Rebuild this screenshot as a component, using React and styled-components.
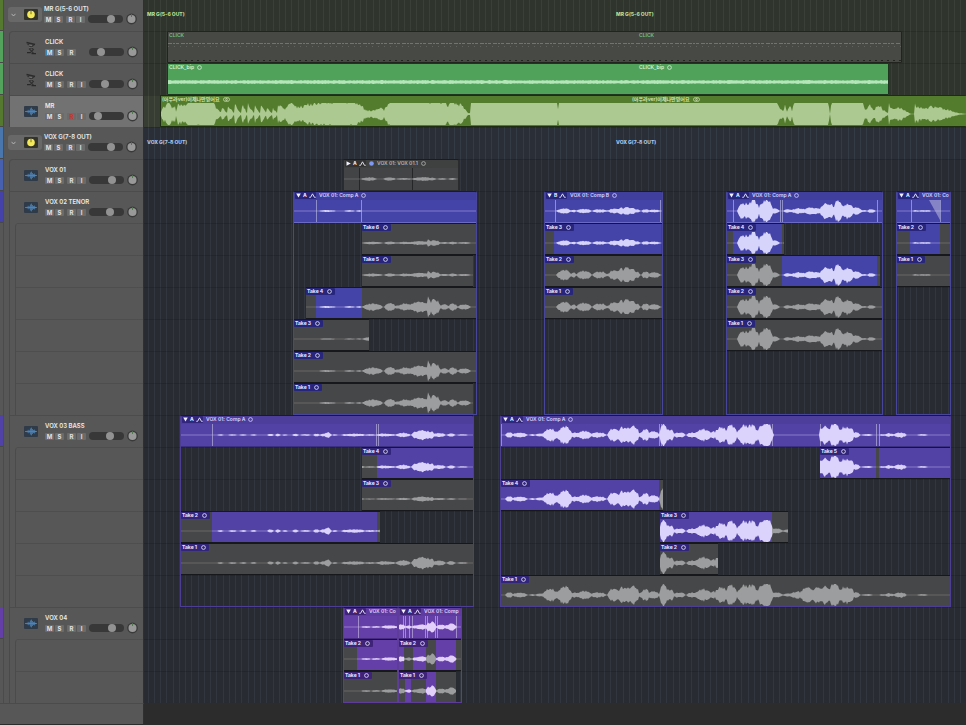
import React from 'react';
import styled, { createGlobalStyle, css } from 'styled-components';

const GlobalStyle = createGlobalStyle`
  * { box-sizing: border-box; }
  body {
    margin: 0;
    background: #2c2c2c;
    overflow: hidden;
    font-family: Inter, "Noto Sans CJK KR", sans-serif;
  }
  button, input { font: inherit; margin: 0; padding: 0; border: 0; }
`;

const ORIGIN = 144;

/* ---------- layout ---------- */

const Window = styled.main`
  display: flex;
  flex-direction: column;
  min-height: 100vh;
  margin-top: -1px;
  overflow: hidden;
`;

const TrackRow = styled.section`
  display: flex;
  flex: none;
  height: ${(p) => p.$lanes * 32}px;
`;

const Head = styled.div`
  display: flex;
  flex: none;
  width: 144px;
  background: #575757;
  border-right: 1px solid #303030;
`;

const Strip = styled.div`
  width: 4px;
  height: 32px;
  flex: none;
  background: ${(p) => p.$color};
  border-right: 1px solid #484848;
  border-bottom: 1px solid #484848;
`;

const Gutter = styled.div`
  flex: none;
  width: 4px;
  border-right: 1px solid #4b4b4b;
  margin-right: 5px;
  margin-left: -4px;
`;

const HeadBody = styled.div`
  flex: 1;
  min-width: 0;
  ${(p) =>
    p.$nested &&
    css`
      border-left: 1px solid #4a4a4a;
      border-top: 1px solid #4c4c4c;
    `}
  border-top-left-radius: ${(p) => (p.$first ? 4 : 0)}px;
  background: ${(p) => (p.$selected ? '#727272' : 'transparent')};
`;

const TrackInfo = styled.div`
  display: flex;
  align-items: center;
  height: 31px;
  margin-bottom: ${(p) => (p.$nested ? 0 : 1)}px;
`;

const IconSlot = styled.div`
  display: flex;
  align-items: center;
  justify-content: center;
  flex: none;
  width: 36px;
  padding-left: ${(p) => (p.$group ? 0 : 8)}px;
  margin-left: -1px;
  svg { display: block; }
`;

const GroupPill = styled.button`
  display: flex;
  align-items: center;
  gap: 8px;
  width: 34px;
  height: 15px;
  margin-right: 2px;
  padding: 0 3px;
  border-radius: 3px;
  background: #686868;
`;

const Controls = styled.div`
  display: flex;
  flex-direction: column;
  flex: 1;
`;

const TrackName = styled.div`
  font-size: 6px;
  line-height: 9px;
  height: 9px;
  font-weight: 600;
  color: #ececec;
  white-space: nowrap;
`;

const ControlRow = styled.div`
  display: flex;
  align-items: center;
  height: 12px;
`;

const ButtonPair = styled.div`
  display: flex;
  gap: 1px;
  width: 19px;
  margin-right: 3px;
`;

const MiniButton = styled.button`
  width: 9px;
  height: 7px;
  border-radius: 1px;
  font-size: 6px;
  line-height: 7px;
  font-weight: 700;
  text-align: center;
  background: ${(p) => (p.$on ? '#3a7fa6' : '#6b6b6b')};
  color: ${(p) => (p.$armed ? '#c0392b' : '#e2e2e2')};
`;

const Volume = styled.input`
  appearance: none;
  width: 35px;
  height: 8px;
  border-radius: 4px;
  background: #383838;
  &::-webkit-slider-thumb {
    appearance: none;
    width: 8px;
    height: 8px;
    border-radius: 50%;
    background: #929292;
  }
`;

const PanButton = styled.button`
  width: 12px;
  height: 12px;
  margin-left: 3px;
  background: none;
  svg { display: block; }
`;

const TakeRows = styled.div`
  flex: 1;
  height: ${(p) => p.$lanes * 32}px;
  margin-left: 5px;
  border-left: 1px solid #4b4b4b;
  border-top-left-radius: 4px;
  background: repeating-linear-gradient(#4e4e4e 0 1px, transparent 1px 32px);
`;

const laneColors = {
  green: ['#2f342c', '#3a4037'],
  greenLit: ['#383d33', '#444b3d'],
  vox: ['#282b32', '#32363e'],
  voxGroup: ['#2a2f37', '#353b44'],
};

const Lane = styled.div`
  display: flex;
  flex: 1;
  min-width: 0;
  overflow: hidden;
  background-color: ${(p) => laneColors[p.$tone][0]};
  background-image:
    repeating-linear-gradient(rgba(0, 0, 0, 0.14) 0 1px, transparent 1px 32px),
    repeating-linear-gradient(
      90deg,
      transparent 0 4px,
      ${(p) => laneColors[p.$tone][1]} 4px 5px,
      transparent 5px 10px,
      ${(p) => laneColors[p.$tone][1]} 10px 11px,
      transparent 11px 16px,
      ${(p) => laneColors[p.$tone][1]} 16px 17px,
      transparent 17px 22px,
      ${(p) => laneColors[p.$tone][1]} 22px 23px,
      transparent 23px 25px
    );
`;

const LaneLabel = styled.div`
  flex: 0 0 469px;
  padding-left: 3px;
  font-size: 5px;
  line-height: 31px;
  font-weight: 800;
  color: ${(p) => p.$color};
  white-space: nowrap;
`;

const Footer = styled.div`
  display: flex;
  flex: 1;
  background: #2c2c2c;
`;

const FooterHead = styled.div`
  width: 144px;
  background: #575757;
  border-right: 1px solid #303030;
  border-top: 1px solid #4b4b4b;
`;

/* ---------- regions ---------- */

const Region = styled.div`
  display: flex;
  flex-direction: column;
  flex: none;
  width: ${(p) => p.$w}px;
  height: 32px;
  margin-left: ${(p) => p.$gap}px;
  border: 1px solid ${(p) => p.$edge};
  border-right-width: ${(p) => (p.$open ? 0 : 1)}px;
  border-radius: 1px;
  overflow: hidden;
  background: ${(p) => p.$fill};
  svg { display: block; }
`;

const RegionTitles = styled.div`
  display: flex;
  flex: none;
  height: 7px;
  font-size: 5px;
  line-height: 7px;
  font-weight: 600;
  color: ${(p) => p.$color};
  white-space: nowrap;
`;

const RegionTitle = styled.div`
  display: flex;
  align-items: center;
  gap: 3px;
  flex: 0 0 470px;
  padding-left: 1px;
`;

const Folder = styled.article`
  flex: none;
  width: ${(p) => p.$w}px;
  height: ${(p) => p.$lanes * 32}px;
  margin-left: ${(p) => p.$gap}px;
  border: 1px solid ${(p) => p.$edge};
  border-top-color: #1b1c22;
  border-radius: 2px 2px 0 0;
  overflow: hidden;
`;

const Comp = styled.div`
  height: 31px;
  background: ${(p) => p.$fill};
  border-bottom: 1px solid ${(p) => p.$line};
  svg { display: block; }
`;

const CompTitle = styled.div`
  display: flex;
  align-items: center;
  gap: 3px;
  height: 8px;
  padding: 0 0 1px 1px;
  font-size: 5px;
  line-height: 7px;
  font-weight: 600;
  color: ${(p) => p.$color};
  background: rgba(0, 0, 0, 0.06);
  white-space: nowrap;
`;

const CompTools = styled.div`
  display: flex;
  align-items: center;
  flex: none;
  gap: 2px;
  width: 21px;
  height: 7px;
  padding-left: 1px;
  border-radius: 1px;
  background: ${(p) => p.$bg};
  color: #f2f1ff;
  line-height: 7px;
  font-weight: 700;
`;

const TakeLane = styled.div`
  display: flex;
  height: 32px;
`;

const Take = styled.div`
  position: relative;
  display: flex;
  flex: none;
  height: 32px;
  margin-left: ${(p) => p.$gap}px;
  border-top: 1px solid #17181c;
  border-bottom: 1px solid #17181c;
`;

const Segment = styled.div`
  flex: none;
  width: ${(p) => p.$w}px;
  padding-top: 8px;
  background: ${(p) => p.$fill};
  svg { display: block; }
`;

const TakeLabel = styled.div`
  position: absolute;
  top: 0;
  left: 0;
  display: flex;
  align-items: center;
  gap: 4px;
  height: 7px;
  padding: 0 3px 0 1px;
  border-radius: 1px;
  background: ${(p) => p.$bg};
  color: #eceaff;
  font-size: 5px;
  line-height: 7px;
  font-weight: 700;
  white-space: nowrap;
`;

/* ---------- icons ---------- */

const LoopDot = ({ color = 'currentColor' }) => (
  <svg width="5" height="5" viewBox="0 0 5 5" aria-hidden="true">
    <circle cx="2.5" cy="2.5" r="1.9" fill="none" stroke={color} strokeWidth="0.8" />
  </svg>
);

const StereoDot = () => (
  <svg width="7" height="5" viewBox="0 0 7 5" aria-hidden="true">
    <circle cx="2.4" cy="2.5" r="1.9" fill="none" stroke="currentColor" strokeWidth="0.7" />
    <circle cx="4.6" cy="2.5" r="1.9" fill="none" stroke="currentColor" strokeWidth="0.7" />
  </svg>
);

const Triangle = ({ closed }) => (
  <svg width="5" height="5" viewBox="0 0 5 5" aria-hidden="true">
    <path d={closed ? 'M0.5 0.2L4.8 2.5L0.5 4.8Z' : 'M0.2 0.5H4.8L2.5 4.6Z'} fill="currentColor" />
  </svg>
);

const Peak = () => (
  <svg width="7" height="5" viewBox="0 0 7 5" aria-hidden="true">
    <path d="M0.3 4.3H1.6L3.5 0.8L5.4 4.3H6.7" fill="none" stroke="currentColor" strokeWidth="0.9" />
  </svg>
);

const Chevron = () => (
  <svg width="5" height="4" viewBox="0 0 5 4" aria-hidden="true">
    <path d="M0.5 0.8L2.5 3L4.5 0.8" fill="none" stroke="#c4c4c4" strokeWidth="0.8" />
  </svg>
);

const GroupIcon = () => (
  <svg width="14" height="11" viewBox="0 0 14 11" aria-hidden="true">
    <rect width="14" height="11" rx="1" fill="#33332a" />
    <circle cx="7" cy="5.5" r="3.8" fill="#f3e95a" />
    <path d="M7 1.8V5.2" stroke="#6b6420" strokeWidth="0.9" />
  </svg>
);

const AudioIcon = () => (
  <svg width="14" height="11" viewBox="0 0 14 11" aria-hidden="true">
    <rect width="14" height="11" rx="1" fill="#2f3b48" />
    <path
      d="M1 5.5H13M3 4.8V6.2M4.2 3.8V7.2M5.4 4.4V6.6M6.4 2.5V8.5M7.4 1.6V9.4M8.4 3V8M9.4 4V7M10.4 3.6V7.4M11.4 4.8V6.2"
      stroke="#5089c0"
      strokeWidth="0.8"
    />
  </svg>
);

const StandIcon = () => (
  <svg width="14" height="14" viewBox="0 0 14 14" aria-hidden="true">
    <path d="M2.5 1.6L11 3.6" stroke="#2b2b2b" strokeWidth="1.5" />
    <path d="M3.6 3L9.4 8.6L6 11.8M10 3.6L5.4 8L9.6 12.4" fill="none" stroke="#303030" strokeWidth="1.1" />
    <path d="M3 11.6H6.4M7.5 12.6H12" stroke="#292929" strokeWidth="1.2" />
    <path d="M5.4 6.6H8.6M4.4 4.4H8" stroke="#8a8a8a" strokeWidth="0.5" />
  </svg>
);

const Knob = () => (
  <svg width="12" height="12" viewBox="0 0 12 12" aria-hidden="true">
    <circle cx="5.5" cy="6" r="5.4" fill="#3a3a3a" />
    <circle cx="5.5" cy="6" r="4" fill="#999" />
    <path d="M5.5 1.2V4" stroke="#4f7a4c" strokeWidth="1" />
  </svg>
);

/* ---------- waveforms ---------- */

// [start, end, amplitude] bursts, on the same horizontal scale as the regions
const bursts = {
  vox1: [[362, 376, 2], [384, 395, 2], [397, 411, 1], [412, 436, 2], [438, 446, 1], [449, 456, 1]],
  tenorA: [[320, 335, 1], [345, 354, 1], [357, 361, 1], [363, 382, 4], [385, 395, 5], [394, 401, 2], [399, 412, 4], [410, 428, 6], [427, 431, 13], [430, 440, 9], [440, 449, 3], [449, 457, 4], [458, 470, 3]],
  tenorB: [[557, 571, 6], [571, 576, 3], [577, 591, 5], [593, 607, 4], [607, 613, 2], [609, 620, 6], [617, 624, 8], [621, 636, 9], [633, 640, 4], [642, 649, 4], [648, 660, 3]],
  tenorC: [[738, 745, 9], [743, 751, 10], [748, 759, 13], [759, 773, 13], [771, 779, 3], [784, 792, 2], [791, 806, 3], [804, 822, 4], [820, 835, 9], [834, 843, 13], [842, 853, 9], [851, 862, 4], [861, 867, 1], [868, 875, 2]],
  tenorD: [[913, 919, 1], [919, 926, 1], [925, 930, 1]],
  bassA: [[218, 223, 1], [229, 236, 1], [240, 246, 1], [251, 256, 1], [268, 273, 2], [276, 280, 2], [283, 287, 1], [293, 298, 2], [301, 310, 1], [314, 319, 2], [320, 330, 2], [325, 331, 4], [333, 337, 1], [342, 365, 2], [365, 375, 1], [376, 395, 2], [396, 410, 3], [412, 419, 5], [416, 427, 7], [424, 434, 6], [433, 445, 3], [447, 455, 2], [458, 467, 1]],
  bassB: [[506, 513, 3], [513, 527, 3], [530, 535, 1], [536, 545, 2], [543, 558, 7], [557, 572, 10], [571, 580, 3], [578, 591, 5], [590, 606, 3], [608, 621, 8], [617, 628, 9], [625, 639, 11], [638, 648, 4], [642, 649, 7], [647, 659, 4], [660, 667, 13], [664, 674, 7], [673, 685, 3], [687, 697, 3], [695, 712, 7], [710, 717, 4], [715, 728, 9], [725, 737, 11], [737, 759, 12], [758, 773, 15], [772, 782, 3], [783, 800, 2], [790, 805, 4], [800, 815, 8], [812, 822, 10], [819, 832, 10], [829, 840, 14], [838, 854, 10], [852, 860, 3], [862, 872, 1], [880, 885, 1], [885, 894, 2], [894, 906, 3], [918, 927, 1]],
  vox4: [[362, 370, 1], [372, 380, 1], [382, 397, 2], [397, 405, 3], [406, 411, 2], [412, 420, 2], [417, 426, 3], [426, 436, 6], [437, 445, 3], [445, 452, 3], [448, 456, 4]],
};

const mixPoints = [
  [160, 0], [162, 5], [168, 11], [172, 7], [175, 8], [176, 2], [178, 10], [185, 8], [190, 15], [213, 15], [216, 6], [221, 2],
  [222, 7], [227, 1], [228, 9], [234, 1], [235, 9], [241, 1], [242, 10], [247, 1], [248, 9], [254, 1], [255, 8], [260, 1],
  [261, 9], [266, 2], [267, 6], [272, 1], [273, 6], [277, 1], [278, 9], [285, 5], [290, 11], [300, 7], [306, 9], [318, 11],
  [326, 12], [334, 15], [354, 15], [361, 8], [366, 4], [372, 3], [380, 6], [384, 4], [391, 15], [440, 15], [448, 9],
  [454, 13], [462, 9], [468, 1], [470, 1], [471, 17], [556, 17], [558, 6], [559, 17], [776, 17], [779, 7], [783, 3],
  [785, 9], [787, 2], [790, 10], [792, 3], [795, 16], [828, 16], [830, 0], [832, 16], [862, 16], [865, 4], [870, 8],
  [874, 4], [879, 10], [882, 5], [888, 1], [889, 10], [894, 5], [899, 7], [911, 0], [914, 0], [915, 9], [925, 5], [935, 8],
  [945, 5], [958, 1], [966, 0],
];

const noise = (n) => {
  const v = Math.sin(n * 127.1) * 43758.5453;
  return v - Math.floor(v);
};

const burstLevel = (list, x) =>
  list.reduce((max, [a, b, amp]) => {
    if (x < a || x > b) return max;
    const shape = Math.pow(Math.sin((Math.PI * (x - a + 0.2)) / (b - a + 0.4)), 0.45);
    return Math.max(max, amp * shape);
  }, 0);

const lineLevel = (points, x) => {
  const i = points.findIndex(([px]) => px >= x);
  if (i <= 0) return 0;
  const [x0, y0] = points[i - 1];
  const [x1, y1] = points[i];
  return y0 + ((y1 - y0) * (x - x0)) / (x1 - x0);
};

const Waveform = ({ from, to, level, color, bars = [], barColor = 'rgba(255,255,255,.4)', fade, height = 22 }) => {
  const mid = height / 2;
  const top = [];
  const bottom = [];
  for (let x = from; x <= to; x += 1) {
    const l = level(x);
    const common = 0.55 + 0.35 * noise(x);
    const up = Math.min(mid, l * (common + 0.15 * noise(x + 0.3)));
    const down = Math.min(mid, l * (common + 0.15 * noise(x + 0.5)));
    top.push(`${x - from} ${(mid - up).toFixed(1)}`);
    bottom.unshift(`${x - from} ${(mid + down).toFixed(1)}`);
  }
  const w = to - from;
  return (
    <svg width={w} height={height} viewBox={`0 0 ${w} ${height}`} aria-hidden="true">
      {bars.map((b) => (
        <rect key={b} x={b - from} y="0" width="1" height={height} fill={barColor} />
      ))}
      {fade && <path d={`M${fade[0] - from} 0H${fade[1] - from}V${height - 2}Z`} fill="rgba(255,255,255,.35)" />}
      <path d={`M0 ${mid}H${w}`} stroke={color} strokeOpacity="0.5" strokeWidth="0.8" />
      <path d={`M${top.join('L')}L${bottom.join('L')}Z`} fill={color} />
    </svg>
  );
};

/* ---------- data ---------- */

const blue = { fill: '#4443a8', edge: '#47469c', line: '#6a69c4', label: '#27267c', wave: '#d6d4fb' };
const violet = { fill: '#5242a6', edge: '#4c3d95', line: '#3b2f80', label: '#32257c', wave: '#dbd3fb' };
const purple = { fill: '#643fa8', edge: '#5d3d99', line: '#472b80', label: '#3f2379', wave: '#e2d0fa' };
const muted = { fill: '#434445', edge: '#2b2c2e', line: '#2b2c2e', label: '#333', wave: '#97989a' };

const TAKE_FILL = '#464748';
const TAKE_WAVE = '#9c9d9e';

const tracks = [
  { name: 'MR G(5-6 OUT)', kind: 'group', strip: '#557a2f', volume: 72, tone: 'green', label: '#b9dc94' },
  { name: 'CLICK', kind: 'stand', strip: '#53a35c', volume: 31, tone: 'green', muteOn: true, noInput: true, first: true, region: 'click' },
  { name: 'CLICK', kind: 'stand', strip: '#53a35c', volume: 45, tone: 'green', region: 'bip' },
  { name: 'MR', kind: 'audio', strip: '#557a2f', volume: 18, tone: 'greenLit', selected: true, armed: true, region: 'mix' },
  { name: 'VOX G(7-8 OUT)', kind: 'group', strip: '#4a76ae', volume: 72, tone: 'voxGroup', label: '#a9c6ec' },
  {
    name: 'VOX 01', kind: 'audio', strip: '#4760b0', volume: 72, tone: 'vox', first: true,
    folders: [{ start: 343, end: 459, title: 'VOX 01: VOX 01.1', comp: 'A', closed: true, theme: muted, source: 'vox1', bars: [359, 412] }],
  },
  {
    name: 'VOX 02 TENOR', kind: 'audio', strip: '#4543aa', volume: 62, tone: 'vox', takes: 6,
    folders: [
      {
        start: 293, end: 477, title: 'VOX 01: Comp A', comp: 'A', theme: blue, source: 'tenorA', until: 362, bars: [316, 361],
        takes: [
          { start: 362, end: 477, gain: 0.35 },
          { start: 362, end: 473, gain: 0.4 },
          { start: 306, end: 477, on: [[316, 362]] },
          { start: 294, end: 369, gain: 0.6 },
          { start: 294, end: 477 },
          { start: 294, end: 473 },
        ],
      },
      {
        start: 544, end: 663, title: 'VOX 01: Comp B', comp: 'B', theme: blue, source: 'tenorB', gain: 0.5, bars: [555, 660],
        takes: [
          { start: 545, end: 663, gain: 0.5, on: [[554, 661]] },
          { start: 545, end: 663 },
          { start: 545, end: 663 },
        ],
      },
      {
        start: 726, end: 883, title: 'VOX 01: Comp A', comp: 'A', theme: blue, source: 'tenorC', bars: [733, 780, 782, 877],
        takes: [
          { start: 727, end: 784, on: [[733, 782]] },
          { start: 727, end: 880, on: [[782, 877]] },
          { start: 727, end: 883 },
          { start: 727, end: 883 },
        ],
      },
      {
        start: 896, end: 951, title: 'VOX 01: Co', short: true, comp: 'A', theme: blue, source: 'tenorD', bars: [911, 940], fade: [929, 940],
        takes: [
          { start: 897, end: 951, on: [[910, 940]] },
          { start: 897, end: 951 },
        ],
      },
    ],
  },
  {
    name: 'VOX 03 BASS', kind: 'audio', strip: '#5142a8', volume: 62, tone: 'vox', takes: 5,
    folders: [
      {
        start: 180, end: 474, title: 'VOX 01: Comp A', comp: 'A', theme: violet, source: 'bassA', gain: 0.8, bars: [212, 376, 378],
        takes: [
          { start: 362, end: 474, gain: 0.8, on: [[377, 474]] },
          { start: 362, end: 474, gain: 0.4 },
          { start: 181, end: 380, on: [[212, 377]] },
          { start: 181, end: 474 },
        ],
      },
      {
        start: 500, end: 951, title: 'VOX 01: Comp A', comp: 'A', theme: violet, source: 'bassB', silence: [773, 820], bars: [501, 659, 661, 772, 820, 876, 879],
        takes: [
          { start: 820, end: 951, on: [[820, 876], [879, 951]] },
          { start: 501, end: 663, on: [[501, 659]] },
          { start: 660, end: 788, on: [[660, 772]] },
          { start: 660, end: 718 },
          { start: 501, end: 951 },
        ],
      },
    ],
  },
  {
    name: 'VOX 04', kind: 'audio', strip: '#643fa8', volume: 72, tone: 'vox', takes: 2,
    folders: [
      {
        start: 343, end: 398, title: 'VOX 01: Co', short: true, comp: 'A', theme: purple, source: 'vox4', bars: [358],
        takes: [{ start: 344, end: 398, on: [[357, 398]] }, { start: 344, end: 398 }],
      },
      {
        start: 398, end: 462, title: 'VOX 01: Comp', short: true, comp: 'A', theme: purple, source: 'vox4', bars: [403, 405, 409, 412, 425, 427, 435, 437, 456],
        takes: [
          { start: 399, end: 462, on: [[399, 404], [413, 426], [436, 456]] },
          { start: 399, end: 456, on: [[405, 411], [426, 436]] },
        ],
      },
    ],
  },
];

/* ---------- parts ---------- */

const splitTake = ({ start, end, on = [] }) => {
  const parts = [];
  let cursor = start;
  on.forEach(([a, b]) => {
    const stop = Math.min(b, end);
    if (a > cursor) parts.push({ from: cursor, to: a, active: false });
    parts.push({ from: a, to: stop, active: true });
    cursor = stop;
  });
  if (cursor < end) parts.push({ from: cursor, to: end, active: false });
  return parts;
};

const TakeFolder = ({ folder, previousEnd, lanes }) => {
  const { start, end, title, short, comp, closed, theme, source, takes = [], gain = 1, silence, until, bars, fade } = folder;
  const raw = (x) => burstLevel(bursts[source], x);
  const compLevel = (x) => {
    if (until && x > until) return 0;
    if (silence && x > silence[0] && x < silence[1]) return 0;
    return raw(x) * gain;
  };
  return (
    <Folder $w={end - start} $gap={start - previousEnd} $lanes={lanes} $edge={theme.edge}>
      <Comp $fill={theme.fill} $line={theme.line}>
        <CompTitle $color={closed ? '#b4b5b6' : theme.wave}>
          <CompTools $bg={theme.label}>
            <Triangle closed={closed} />
            <span>{comp}</span>
            <Peak />
          </CompTools>
          {closed && (
            <svg width="5" height="5" viewBox="0 0 5 5" aria-hidden="true">
              <circle cx="2.5" cy="2.5" r="2.3" fill="#8098f0" />
            </svg>
          )}
          <span>{title}</span>
          {!short && <LoopDot />}
        </CompTitle>
        <Waveform
          from={start + 1}
          to={end - 1}
          level={compLevel}
          color={theme.wave}
          bars={bars}
          barColor={closed ? '#252628' : undefined}
          fade={fade}
        />
      </Comp>
      {takes.map((take, i) => (
        <TakeLane key={i}>
          <Take $gap={take.start - start - 1}>
            {splitTake({ ...take, end: Math.min(take.end, end - 1) }).map((part) => (
              <Segment key={part.from} $w={part.to - part.from} $fill={part.active ? theme.fill : TAKE_FILL}>
                <Waveform
                  from={part.from}
                  to={part.to}
                  level={(x) => raw(x) * (take.gain ?? 1)}
                  color={part.active ? theme.wave : TAKE_WAVE}
                />
              </Segment>
            ))}
            <TakeLabel $bg={theme.label}>
              Take {takes.length - i}
              <LoopDot />
            </TakeLabel>
          </Take>
        </TakeLane>
      ))}
    </Folder>
  );
};

const ClickRegion = () => (
  <Region $w={735} $gap={23} $fill="#474945" $edge="#22241f">
    <RegionTitles $color="#6fc183">
      <RegionTitle>CLICK</RegionTitle>
      <RegionTitle>CLICK</RegionTitle>
    </RegionTitles>
    <svg width="733" height="22" aria-hidden="true">
      <path d="M0 4.5H733" stroke="#858783" strokeWidth="1" strokeDasharray="4 1 2 1 3 2" strokeOpacity="0.7" />
      <path d="M0 7.5H733" stroke="#7b7d79" strokeWidth="1" strokeDasharray="1 5" strokeOpacity="0.5" />
      <path d="M5 21.5H733" stroke="#22241f" strokeWidth="1" strokeDasharray="2 4" />
    </svg>
  </Region>
);

const BipRegion = () => (
  <Region $w={722} $gap={23} $fill="#50a25b" $edge="#1f3522">
    <RegionTitles $color="#d3f2d3">
      <RegionTitle>CLICK_bip <LoopDot /></RegionTitle>
      <RegionTitle>CLICK_bip <LoopDot /></RegionTitle>
    </RegionTitles>
    <Waveform from={168} to={888} level={() => 2} color="#b4e6b9" />
  </Region>
);

const MixRegion = () => (
  <Region $w={806} $gap={16} $fill="#537c2d" $edge="#1f2c14" $open>
    <RegionTitles $color="#d4e6bc">
      <RegionTitle>(아우라ver)이제나만믿어요 <StereoDot /></RegionTitle>
      <RegionTitle>(아우라ver)이제나만믿어요 <StereoDot /></RegionTitle>
    </RegionTitles>
    <Waveform from={161} to={966} level={(x) => lineLevel(mixPoints, x) * 1.2} color="#adc992" />
  </Region>
);

const regions = { click: ClickRegion, bip: BipRegion, mix: MixRegion };

const TrackHeader = ({ track }) => {
  const { name, kind, strip, volume, selected, muteOn, armed, noInput, first, takes } = track;
  const group = kind === 'group';
  return (
    <Head>
      <Strip $color={strip} />
      <Gutter />
      <HeadBody $nested={!group} $first={first} $selected={selected}>
        <TrackInfo $nested={!group}>
          <IconSlot $group={group}>
            {group && (
              <GroupPill aria-label={`Collapse ${name}`}>
                <Chevron />
                <GroupIcon />
              </GroupPill>
            )}
            {kind === 'stand' && <StandIcon />}
            {kind === 'audio' && <AudioIcon />}
          </IconSlot>
          <Controls>
            <TrackName>{name}</TrackName>
            <ControlRow>
              <ButtonPair>
                <MiniButton $on={muteOn} aria-label="Mute">M</MiniButton>
                <MiniButton aria-label="Solo">S</MiniButton>
              </ButtonPair>
              <ButtonPair>
                <MiniButton $armed={armed} aria-label="Record">R</MiniButton>
                {!noInput && <MiniButton aria-label="Input">I</MiniButton>}
              </ButtonPair>
              <Volume type="range" min="0" max="100" defaultValue={volume} aria-label={`${name} volume`} />
              <PanButton aria-label={`${name} pan`}><Knob /></PanButton>
            </ControlRow>
          </Controls>
        </TrackInfo>
        {takes && <TakeRows $lanes={takes} />}
      </HeadBody>
    </Head>
  );
};

const TrackContent = ({ track, lanes }) => {
  const { name, tone, label, region, folders = [] } = track;
  const RegionView = regions[region];
  return (
    <Lane $tone={tone}>
      {label && (
        <>
          <LaneLabel $color={label}>{name}</LaneLabel>
          <LaneLabel $color={label}>{name}</LaneLabel>
        </>
      )}
      {RegionView && <RegionView />}
      {folders.map((folder, i) => (
        <TakeFolder
          key={folder.start}
          folder={folder}
          lanes={lanes}
          previousEnd={i ? folders[i - 1].end : ORIGIN}
        />
      ))}
    </Lane>
  );
};

export default function App() {
  return (
    <>
      <GlobalStyle />
      <Window>
        {tracks.map((track, i) => {
          const lanes = 1 + (track.takes ?? 0);
          return (
            <TrackRow key={i} $lanes={lanes}>
              <TrackHeader track={track} />
              <TrackContent track={track} lanes={lanes} />
            </TrackRow>
          );
        })}
        <Footer>
          <FooterHead />
        </Footer>
      </Window>
    </>
  );
}
